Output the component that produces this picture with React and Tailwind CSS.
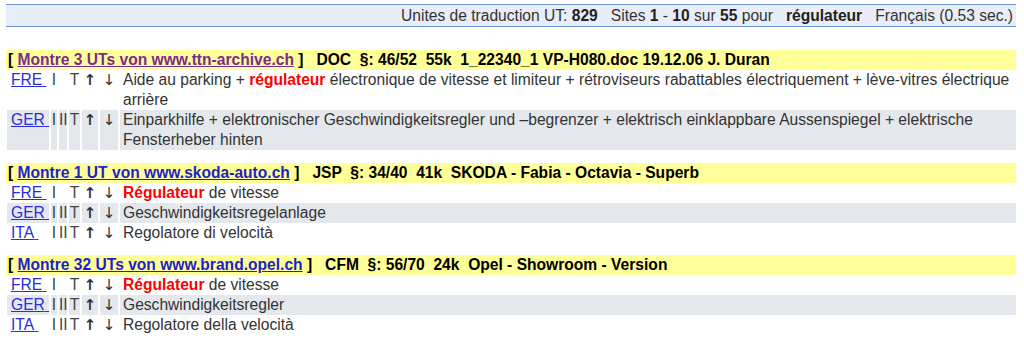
import React from 'react';

const blocks = [
  {
    space: 'mt-[23px]',
    visited: true,
    link: 'Montre 3 UTs von www.ttn-archive.ch',
    meta: '   DOC  §: 46/52  55k  1_22340_1 VP-H080.doc 19.12.06 J. Duran',
    rows: [
      {
        lang: 'FRE',
        marks: ['I', '', 'T'],
        text: (
          <>
            Aide au parking + <b className="text-[#ff0000]">régulateur</b> électronique de vitesse et limiteur + rétroviseurs rabattables électriquement + lève-vitres électrique arrière
          </>
        ),
      },
      {
        lang: 'GER',
        shade: true,
        marks: ['I', 'II', 'T'],
        text: 'Einparkhilfe + elektronischer Geschwindigkeitsregler und –begrenzer + elektrisch einklappbare Aussenspiegel + elektrische Fensterheber hinten',
      },
    ],
  },
  {
    space: 'mt-[13px]',
    link: 'Montre 1 UT von www.skoda-auto.ch',
    meta: '   JSP  §: 34/40  41k  SKODA - Fabia - Octavia - Superb',
    rows: [
      {
        lang: 'FRE',
        marks: ['I', '', 'T'],
        text: (
          <>
            <b className="text-[#ff0000]">Régulateur</b> de vitesse
          </>
        ),
      },
      { lang: 'GER', shade: true, marks: ['I', 'II', 'T'], text: 'Geschwindigkeitsregelanlage' },
      { lang: 'ITA', marks: ['I', 'II', 'T'], text: 'Regolatore di velocità' },
    ],
  },
  {
    space: 'mt-[12px]',
    link: 'Montre 32 UTs von www.brand.opel.ch',
    meta: '   CFM  §: 56/70  24k  Opel - Showroom - Version',
    rows: [
      {
        lang: 'FRE',
        marks: ['I', '', 'T'],
        text: (
          <>
            <b className="text-[#ff0000]">Régulateur</b> de vitesse
          </>
        ),
      },
      { lang: 'GER', shade: true, marks: ['I', 'II', 'T'], text: 'Geschwindigkeitsregler' },
      { lang: 'ITA', marks: ['I', 'II', 'T'], text: 'Regolatore della velocità' },
    ],
  },
];

const Cell = ({ shade, className = '', children }) => (
  <div className={`${shade ? 'bg-[#e4e8ec]' : ''} ${className}`}>{children}</div>
);

const UnitRow = ({ row }) => (
  <div className="grid grid-cols-[42px_6px_8px_11px_16px_18px_1fr] gap-x-[2px] pl-[1px] leading-[20px]">
    <Cell shade={row.shade} className="pl-[4px] whitespace-nowrap">
      <a href="#" className="text-[#2b2bdf] underline">
        {row.lang}&nbsp;
      </a>
    </Cell>
    {row.marks.map((m, i) => (
      <Cell key={i} shade={row.shade} className="text-center text-[#444] whitespace-nowrap">
        {m}
      </Cell>
    ))}
    <Cell shade={row.shade} className="text-center text-[#333] font-['DejaVu_Sans',sans-serif] font-bold text-[15px]">↑</Cell>
    <Cell shade={row.shade} className="text-center text-[#333] font-['DejaVu_Sans',sans-serif] text-[15px]">↓</Cell>
    <Cell shade={row.shade} className="pl-[3px] pr-[4px] text-[#333]">
      {row.text}
    </Cell>
  </div>
);

const Block = ({ block }) => (
  <div className={block.space}>
    <div className="h-[20px] leading-[20px] bg-[#ffff99] pl-[2px] font-bold text-black whitespace-pre">
      {'[ '}
      <a
        href="#"
        className={`underline ${block.visited ? 'text-[#7b2b8c]' : 'text-[#1f1fc9]'}`}
      >
        {block.link}
      </a>
      {' ]'}
      {block.meta}
    </div>
    {block.rows.map((row) => (
      <UnitRow key={row.lang} row={row} />
    ))}
  </div>
);

export default function App() {
  return (
    <div className="w-[1024px] h-[343px] bg-white pt-[4px] pl-[6px] pr-[8px] font-['Liberation_Sans',Arial,sans-serif] text-[15.6px] text-[#333]">
      <div className="h-[23px] border-y border-[#6f91d8] bg-[#e7edf9] flex items-center justify-end pr-[3px] whitespace-pre">
        Unites de traduction UT: <b className="text-[#222]">829</b>
        {'   Sites '}
        <b className="text-[#222]">1</b> - <b className="text-[#222]">10</b> sur <b className="text-[#222]">55</b> pour{'   '}
        <b className="text-[#222]">régulateur</b>
        {'   Français (0.53 sec.)'}
      </div>
      {blocks.map((block) => (
        <Block key={block.link} block={block} />
      ))}
    </div>
  );
}
